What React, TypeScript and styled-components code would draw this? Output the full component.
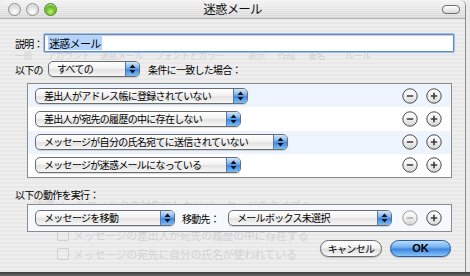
import React from 'react';
import styled, { createGlobalStyle } from 'styled-components';

const jp = `"Noto Sans CJK JP", "Noto Sans", sans-serif`;

const GlobalStyle = createGlobalStyle`
  html, body {
    margin: 0;
    padding: 0;
    background: #e9e9e9;
  }
  body {
    font-family: ${jp};
  }
`;

const Page = styled.div`
  width: 470px;
  height: 276px;
  overflow: hidden;
  display: flex;
  flex-direction: column;
  background: repeating-linear-gradient(#eeeeee 0 1px, #e6e6e6 1px 2px);
`;

const Window = styled.div`
  position: relative;
  width: 465px;
  height: 272px;
  border-right: 1px solid #8a8a8a;
  border-radius: 6px 6px 0 0;
  overflow: hidden;
  display: flex;
  flex-direction: column;
  background: repeating-linear-gradient(#eeeeee 0 2px, #e8e8e8 2px 4px);
`;

const BottomEdge = styled.div`
  flex: 1;
  background: linear-gradient(#3a3a3a, #6a6a6a);
`;

const TitleBar = styled.div`
  height: 18px;
  flex: none;
  display: flex;
  align-items: center;
  position: relative;
  border-bottom: 1px solid #b4b4b4;
  background: repeating-linear-gradient(rgba(255,255,255,0.35) 0 1px, rgba(0,0,0,0) 1px 2px),
    linear-gradient(#f2f2f2, #d6d6d6);
`;

const Lights = styled.div`
  display: flex;
  gap: 5px;
  padding-left: 8px;
`;

const Light = styled.span<{ $green?: boolean }>`
  width: 13px;
  height: 13px;
  border-radius: 50%;
  box-sizing: border-box;
  border: 1px solid ${(p) => (p.$green ? '#4a8a1c' : '#8d8d8d')};
  background: ${(p) =>
    p.$green
      ? 'radial-gradient(circle at 50% 70%, #c6f07a 0, #6fc02c 45%, #3f8d12 100%)'
      : 'radial-gradient(circle at 50% 70%, #ffffff 0, #e6e6e6 45%, #b2b2b2 100%)'};
  box-shadow: inset 0 1px 1px rgba(255,255,255,0.8);
`;

const Title = styled.div`
  position: absolute;
  left: 0;
  right: 0;
  top: 0;
  line-height: 18px;
  text-align: center;
  font-size: 12.5px;
  letter-spacing: -0.8px;
  color: #111;
  pointer-events: none;
`;

const Pill = styled.span`
  margin-left: auto;
  margin-right: 5px;
  width: 16px;
  height: 7px;
  border-radius: 4px;
  border: 1px solid #6d6d6d;
  background: linear-gradient(#ffffff, #d8d8d8);
`;

const Body = styled.div`
  position: relative;
  flex: 1;
  padding: 0 0 0 15px;
  display: flex;
  flex-direction: column;
  font-size: 10px;
  letter-spacing: -0.7px;
  color: #000;
`;

/* faint content of the window below the sheet */
const Ghost = styled.div`
  position: absolute;
  inset: 0;
  color: #d2d2d2;
  pointer-events: none;
`;

const GhostText = styled.span<{ $size?: number }>`
  position: absolute;
  font-size: ${(p) => p.$size ?? 9}px;
  letter-spacing: ${(p) => (p.$size ? -0.3 : -0.4)}px;
  line-height: 1;
  white-space: nowrap;
`;

const GhostBox = styled.span`
  position: absolute;
  width: 10px;
  height: 10px;
  border: 1px solid #d0d0d0;
  border-radius: 2px;
`;

const Content = styled.div`
  position: relative;
  display: flex;
  flex-direction: column;
`;

const Line = styled.div<{ $top: number; $h: number }>`
  margin-top: ${(p) => p.$top}px;
  height: ${(p) => p.$h}px;
  display: flex;
  align-items: center;
  white-space: nowrap;
`;

const Label = styled.span<{ $w?: number }>`
  width: ${(p) => (p.$w ? `${p.$w}px` : 'auto')};
  flex: none;
`;

const TextField = styled.div`
  width: 410px;
  height: 18px;
  box-sizing: border-box;
  border: 1px solid #5e8ccb;
  box-shadow: 0 0 0 1px #9dbfe9, inset 0 1px 1px rgba(0,0,0,0.2);
  border-radius: 1px;
  background: #fff;
  display: flex;
  align-items: center;
  padding-left: 3px;
  font-size: 11px;
`;

const Selected = styled.span`
  background: #b4d4fb;
  line-height: 14px;
  padding: 0 1px;
`;

const Popup = styled.div<{ $w: number }>`
  width: ${(p) => p.$w}px;
  height: 16px;
  flex: none;
  box-sizing: border-box;
  display: flex;
  border: 1px solid #6c6c6c;
  border-radius: 5px;
  overflow: hidden;
  background: linear-gradient(#ffffff 0, #f3f3f3 45%, #e2e2e2 55%, #f7f7f7 100%);
  box-shadow: 0 1px 1px rgba(0,0,0,0.15);
`;

const PopupText = styled.span`
  flex: 1;
  padding-left: 8px;
  line-height: 14px;
  overflow: hidden;
`;

const PopupArrows = styled.span`
  width: 13px;
  flex: none;
  border-left: 1px solid #4f78b4;
  display: flex;
  align-items: center;
  justify-content: center;
  background: linear-gradient(#d2e6fb 0, #7fb4f0 40%, #3d88e2 55%, #7dbdf5 100%);
`;

const ListBox = styled.div`
  margin-left: 12px;
  width: 425px;
  box-sizing: border-box;
  border: 1px solid #8c8c8c;
  display: flex;
  flex-direction: column;
`;

const RuleRow = styled.div<{ $alt?: boolean }>`
  height: 23.25px;
  display: flex;
  align-items: center;
  padding: 0 9px 0 7px;
  background: ${(p) => (p.$alt ? '#edf4fd' : '#ffffff')};
`;

const ActionBox = styled.div`
  margin-left: 12px;
  width: 425px;
  height: 28px;
  box-sizing: border-box;
  border: 1px solid #8c8c8c;
  background: #f5f8fc;
  display: flex;
  align-items: center;
  padding: 0 9px 0 7px;
`;

const Spacer = styled.span`
  flex: 1;
`;

const RoundButtons = styled.div`
  display: flex;
  gap: 8px;
`;

const Buttons = styled.div`
  margin-top: 8px;
  display: flex;
  justify-content: flex-end;
  gap: 8px;
  padding-right: 14px;
`;

const PushButton = styled.button<{ $primary?: boolean; $w: number }>`
  width: ${(p) => p.$w}px;
  height: 17px;
  padding: 0;
  border-radius: 9px;
  font-family: ${(p) => (p.$primary ? `"Liberation Sans", sans-serif` : jp)};
  font-weight: ${(p) => (p.$primary ? 700 : 400)};
  font-size: ${(p) => (p.$primary ? 11 : 10)}px;
  letter-spacing: ${(p) => (p.$primary ? 0 : -0.7)}px;
  line-height: 15px;
  color: #000;
  border: 1px solid ${(p) => (p.$primary ? '#2d5c9c' : '#6a6a6a')};
  background: ${(p) =>
    p.$primary
      ? 'linear-gradient(#bcdcfb 0, #78b2ef 40%, #3c87e0 55%, #86c4f7 100%)'
      : 'linear-gradient(#ffffff 0, #f2f2f2 45%, #dedede 55%, #f8f8f8 100%)'};
  box-shadow: 0 1px 1px rgba(0,0,0,0.2);
`;

function Arrows() {
  return (
    <svg width="7" height="10" viewBox="0 0 7 10">
      <path d="M3.5 0.5 L6.5 4 H0.5 Z" fill="#111" />
      <path d="M3.5 9.5 L6.5 6 H0.5 Z" fill="#111" />
    </svg>
  );
}

function PopupButton({ w, text }: { w: number; text: string }) {
  return (
    <Popup $w={w}>
      <PopupText>{text}</PopupText>
      <PopupArrows>
        <Arrows />
      </PopupArrows>
    </Popup>
  );
}

function RoundButton({ plus, disabled }: { plus?: boolean; disabled?: boolean }) {
  const ink = disabled ? '#a8a8a8' : '#3a3a3a';
  const id = `rb${plus ? 'p' : 'm'}${disabled ? 'd' : ''}`;
  return (
    <svg width="16" height="16" viewBox="0 0 16 16">
      <defs>
        <linearGradient id={id} x1="0" y1="0" x2="0" y2="1">
          <stop offset="0" stopColor="#ffffff" />
          <stop offset="0.5" stopColor="#f0f0f0" />
          <stop offset="1" stopColor="#d4d4d4" />
        </linearGradient>
      </defs>
      <circle cx="8" cy="8" r="7.2" fill={`url(#${id})`} stroke={disabled ? '#9a9a9a' : '#4a4a4a'} strokeWidth="1" />
      <path d="M4.8 8 H11.2" stroke={ink} strokeWidth="1.6" />
      {plus && <path d="M8 4.8 V11.2" stroke={ink} strokeWidth="1.6" />}
    </svg>
  );
}

const rules = [
  { text: '差出人がアドレス帳に登録されていない', w: 213 },
  { text: '差出人が宛先の履歴の中に存在しない', w: 206 },
  { text: 'メッセージが自分の氏名宛てに送信されていない', w: 253 },
  { text: 'メッセージが迷惑メールになっている', w: 206 },
];

export default function App() {
  return (
    <>
      <GlobalStyle />
      <Page>
        <Window>
          <TitleBar>
            <Lights>
              <Light />
              <Light />
              <Light $green />
            </Lights>
            <Title>迷惑メール</Title>
            <Pill />
          </TitleBar>
          <Body>
            <Ghost>
              <GhostText style={{ left: 15, top: 32 }}>一般</GhostText>
              <GhostText style={{ left: 47, top: 32 }}>アカウント</GhostText>
              <GhostText style={{ left: 100, top: 32 }}>迷惑メール</GhostText>
              <GhostText style={{ left: 155, top: 32 }}>フォントとカラー</GhostText>
              <GhostText style={{ left: 248, top: 32 }}>表示</GhostText>
              <GhostText style={{ left: 278, top: 32 }}>作成</GhostText>
              <GhostText style={{ left: 308, top: 32 }}>署名</GhostText>
              <GhostText style={{ left: 345, top: 32 }}>ルール</GhostText>
              <GhostText $size={11} style={{ left: 33, top: 181 }}>
                迷惑メールフィルタの対象にしないメッセージのタイプ：
              </GhostText>
              <GhostBox style={{ left: 57, top: 210 }} />
              <GhostText $size={11} style={{ left: 73, top: 211 }}>
                メッセージの差出人が宛先の履歴の中に存在する
              </GhostText>
              <GhostBox style={{ left: 57, top: 229 }} />
              <GhostText $size={11} style={{ left: 73, top: 230 }}>
                メッセージの宛先に自分の氏名が使われている
              </GhostText>
            </Ghost>
            <Content>
              <Line $top={15} $h={18}>
                <Label $w={29}>説明：</Label>
                <TextField>
                  <Selected>迷惑メール</Selected>
                </TextField>
              </Line>
              <Line $top={9} $h={16}>
                <Label $w={33}>以下の</Label>
                <PopupButton w={92} text="すべての" />
                <Label style={{ marginLeft: 8 }}>条件に一致した場合：</Label>
              </Line>
              <Line $top={6} $h={95} style={{ alignItems: 'stretch' }}>
                <ListBox>
                  {rules.map((r, i) => (
                    <RuleRow key={i} $alt={i % 2 === 0}>
                      <PopupButton w={r.w} text={r.text} />
                      <Spacer />
                      <RoundButtons>
                        <RoundButton />
                        <RoundButton plus />
                      </RoundButtons>
                    </RuleRow>
                  ))}
                </ListBox>
              </Line>
              <Line $top={9} $h={14}>
                <Label>以下の動作を実行：</Label>
              </Line>
              <Line $top={3} $h={28}>
                <ActionBox>
                  <PopupButton w={140} text="メッセージを移動" />
                  <Label style={{ marginLeft: 7, width: 46 }}>移動先：</Label>
                  <PopupButton w={164} text="メールボックス未選択" />
                  <Spacer />
                  <RoundButtons>
                    <RoundButton disabled />
                    <RoundButton plus />
                  </RoundButtons>
                </ActionBox>
              </Line>
              <Buttons>
                <PushButton $w={62}>キャンセル</PushButton>
                <PushButton $w={61} $primary>
                  OK
                </PushButton>
              </Buttons>
            </Content>
          </Body>
        </Window>
        <BottomEdge />
      </Page>
    </>
  );
}
